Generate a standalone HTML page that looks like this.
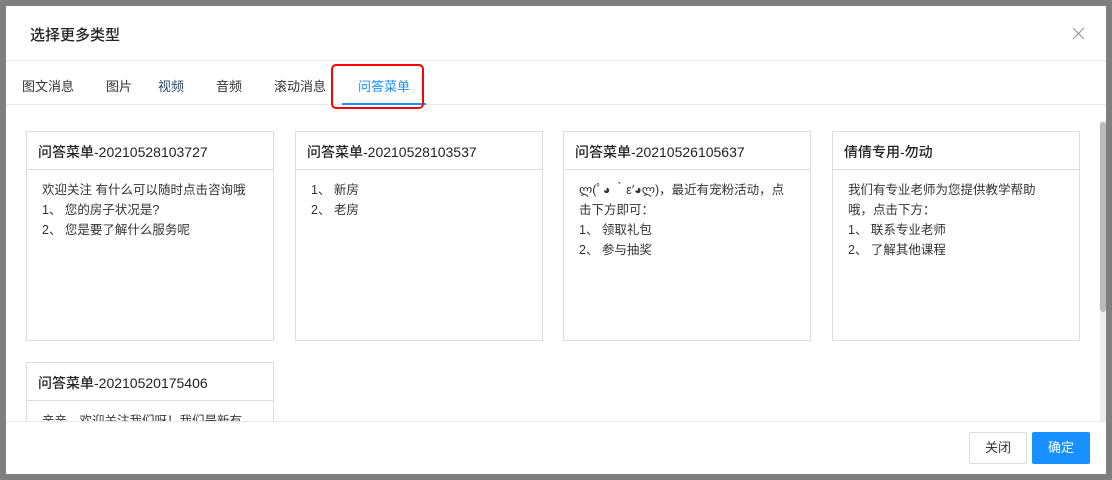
<!DOCTYPE html>
<html><head><meta charset="utf-8"><style>
*{box-sizing:border-box;margin:0;padding:0}
html,body{width:1112px;height:480px;overflow:hidden}
body{background:#7f7f7f;font-family:"Liberation Sans","Noto Sans CJK SC",sans-serif;position:relative;color:#333}
.modal{position:absolute;left:6px;top:6px;width:1100px;height:468px;background:#fff;overflow:hidden}
.title{position:absolute;left:24px;top:18px;font-size:15px;color:#222;font-weight:500}
.tab{position:absolute;top:70px;font-size:13px;color:#333}
.hline{position:absolute;left:0;width:1100px;height:1px;background:#e8e8e8}
.card{position:absolute;width:248px;height:210px;border:1px solid #ddd;background:#fff;overflow:hidden}
.card .h{height:38px;border-bottom:1px solid #ddd;padding:10px 0 0 11px;font-size:14px;color:#222;font-weight:500}
.card .b{padding:10px 0 0 15px;font-size:12.5px;line-height:20px;color:#333}
.btn{position:absolute;top:426px;width:58px;height:32px;border-radius:2px;font-size:13px;text-align:center;line-height:30px}
</style></head><body>
<div class="modal">
<div class="title">选择更多类型</div>
<svg style="position:absolute;left:1066px;top:21px" width="13" height="13" viewBox="0 0 13 13"><path d="M1 1L12 12M12 1L1 12" stroke="#999" stroke-width="1.2"/></svg>
<div class="hline" style="top:54px"></div>
<div class="tab" style="left:16px">图文消息</div>
<div class="tab" style="left:100px">图片</div>
<div class="tab" style="left:152px;color:#2c4a6a">视频</div>
<div class="tab" style="left:210px">音频</div>
<div class="tab" style="left:268px">滚动消息</div>
<div class="tab" style="left:352px;color:#1890ff">问答菜单</div>
<div class="hline" style="top:98px"></div>
<div style="position:absolute;left:336px;top:97px;width:84px;height:2px;background:#1890ff"></div>
<div style="position:absolute;left:325px;top:58px;width:93px;height:45px;border:2.5px solid #f00;border-radius:5px"></div>
<div class="card" style="left:20px;top:125px"><div class="h">问答菜单-20210528103727</div><div class="b">欢迎关注 有什么可以随时点击咨询哦<br>1、 您的房子状况是?<br>2、 您是要了解什么服务呢</div></div>
<div class="card" style="left:289px;top:125px"><div class="h">问答菜单-20210528103537</div><div class="b">1、 新房<br>2、 老房</div></div>
<div class="card" style="left:557px;top:125px"><div class="h">问答菜单-20210526105637</div><div class="b">ლ(ﾟ◕ ‵ε′◕ლ)，最近有宠粉活动，点<br>击下方即可：<br>1、 领取礼包<br>2、 参与抽奖</div></div>
<div class="card" style="left:826px;top:125px"><div class="h">倩倩专用-勿动</div><div class="b">我们有专业老师为您提供教学帮助<br>哦，点击下方：<br>1、 联系专业老师<br>2、 了解其他课程</div></div>
<div class="card" style="left:20px;top:356px;height:60px"><div class="h">问答菜单-20210520175406</div><div class="b">亲亲，欢迎关注我们呀！我们是新有</div></div>
<div style="position:absolute;left:1094px;top:115px;width:6px;height:300px;background:#eee"></div>
<div style="position:absolute;left:1094px;top:116px;width:6px;height:190px;background:#bbb;border-radius:3px"></div>
<div style="position:absolute;left:0;top:415px;width:1100px;height:53px;background:#fff;border-top:1px solid #e8e8e8"></div>
<div class="btn" style="left:963px;border:1px solid #ddd;color:#333">关闭</div>
<div class="btn" style="left:1026px;background:#1890ff;color:#fff;line-height:32px">确定</div>
</div>
</body></html>
